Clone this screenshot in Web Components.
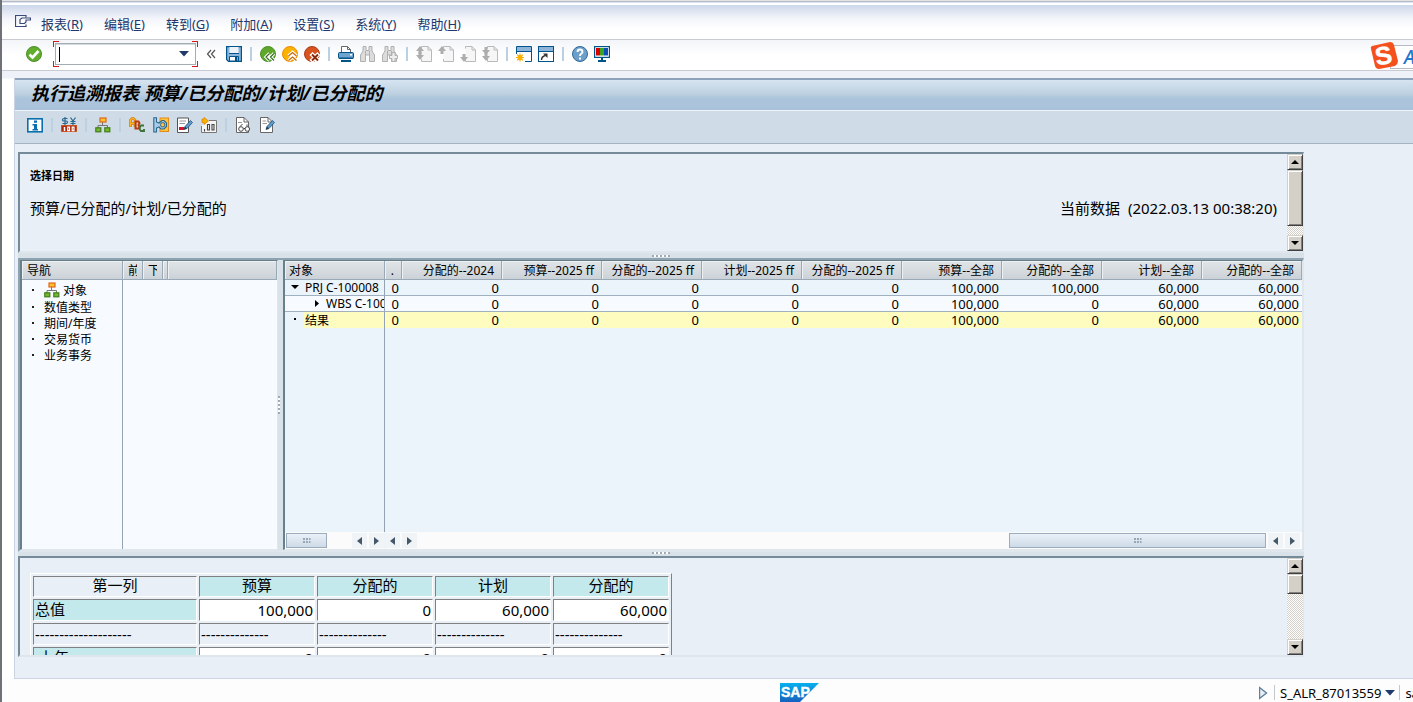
<!DOCTYPE html>
<html lang="zh-CN">
<head>
<meta charset="utf-8">
<title>执行追溯报表</title>
<style>
html,body{margin:0;height:100%;overflow:hidden}
body{font-family:"Noto Sans","Noto Sans CJK SC",sans-serif;font-size:13px;color:#000;background:#fff}
</style>
</head>
<body>
<sap-window></sap-window>
<script>
const define = (name, html, setup) => {
  const t = document.createElement('template');
  customElements.define(name, class extends HTMLElement {
    constructor() {
      super();
      t.innerHTML = t.innerHTML || html;
      this.attachShadow({mode: 'open'}).append(t.content.cloneNode(true));
    }
    connectedCallback() { if (setup) setup(this, this.shadowRoot); }
  });
};

const page = '<path d="M5.5 2.5V.5H12L15.500 4V15.500H5.500V13" fill="#f6f6f6" stroke="#b9b9b9"/><path d="M12 .5V4H15.500" fill="none" stroke="#b9b9b9"/>';
const up = '<path d="M4 0L8 5H5.500V8H2.500V5H0Z" fill="#adadad"/>';
const sheet = '<path d="M1.500 .5H9L13.500 5V15.500H1.500Z" fill="#fff" stroke="#666"/><path d="M9 .5V5H13.500" fill="none" stroke="#666"/>';
const binoc = '<path d="M3 .5H6V4.500H9V.5H12V5L14.500 9V15.500H9.500V9H5.500V15.500H.5V9L3 5Z" fill="#dcdcdc" stroke="#b0b0b0"/><path d="M5.500 5V9M9.500 5V9" stroke="#b0b0b0"/>';
const pencil = '<path d="M7 12.500L8 9.500L13.500 3.500L15.500 5.500L10 11.500Z" fill="#5e9bc8" stroke="#1e5580" stroke-width=".8"/><path d="M7 12.500L8 9.500L10 11.500Z" fill="#333"/>';
const ICONS = {
  exit: '<path d="M11 3.500V1.500H.5V12.500H11V10.500" fill="none" stroke="#3b4a78" stroke-width="1.200"/><path d="M5 9.500V5.500L7 4H15.500V6H11V8L9.500 9.500Z" fill="#fff" stroke="#3b4a78" stroke-width="1.200"/>',
  ok: '<circle cx="8" cy="8" r="7.500" fill="#61ad2f" stroke="#4a8f25"/><path d="M3.500 8.500L6.500 11.500L12.500 5" fill="none" stroke="#fff" stroke-width="2.600"/>',
  save: '<path d="M.6 .6H15.400V15.400H2.500L.6 13.500V.6Z" fill="#8ab6db" stroke="#00548a" stroke-width="1.200"/><path d="M3.500 1H12.500V7H3.500Z" fill="#eef3f8"/><path d="M3 7.500H13" stroke="#00548a"/><path d="M3.500 10.500H12.500V15H3.500Z" fill="#fff" stroke="#00548a"/><path d="M9 11H11.500V15H9Z" fill="#00548a"/>',
  back: '<circle cx="8" cy="8" r="7.500" fill="#5fa82c" stroke="#4c9124"/><path d="M9.500 7.500L6 11L9.500 14.500M14 7.500L10.500 11L14 14.500" fill="none" stroke="#fff" stroke-width="3.200"/><path d="M9.500 7.500L6 11L9.500 14.500M14 7.500L10.500 11L14 14.500" fill="none" stroke="#3a6d22" stroke-width="1.200"/>',
  home: '<circle cx="8" cy="8" r="7.500" fill="#f9b200" stroke="#f08a00"/><path d="M6.500 10L10.500 6.500L14.500 10M6.500 14.500L10.500 11L14.500 14.500" fill="none" stroke="#fff" stroke-width="3.400"/><path d="M6.500 10L10.500 6.500L14.500 10M6.500 14.500L10.500 11L14.500 14.500" fill="none" stroke="#c86a10" stroke-width="1.300"/>',
  cancel: '<circle cx="8" cy="8" r="7.500" fill="#d9531e" stroke="#a93c12"/><path d="M7 7.500L15 15.500M15 7.500L7 15.500" stroke="#fff" stroke-width="4.400"/><path d="M8 8.500L14 14.500M14 8.500L8 14.500" stroke="#8a2c0c" stroke-width="1.900"/>',
  print: '<path d="M3.500 7V.5H9.500L12.500 3.500V7" fill="#fff" stroke="#666"/><path d="M9.500 .5V3.500H12.500" fill="none" stroke="#666"/><rect x=".5" y="6.500" width="15" height="6" rx="1" fill="#6fa4cf" stroke="#00548a"/><path d="M1 11.500H15V13H1Z" fill="#00548a"/><path d="M12 8h2v1.500h-2z" fill="#fff"/><path d="M3 15H13" stroke="#00548a" stroke-width="2"/>',
  find: binoc,
  findnext: binoc + '<path d="M10 6.500H13V9.500H15.500V12.500H13V15.500H10V12.500H7.500V9.500H10Z" fill="#eee" stroke="#b0b0b0"/>',
  first: page + '<g transform="translate(0,0)">' + up + '</g><g transform="translate(0,14) scale(1,-1)">' + up + '</g>',
  prev: page + up,
  next: page + '<g transform="translate(0,16) scale(1,-1)">' + up + '</g>',
  last: page + '<g transform="translate(0,9) scale(1,-1)">' + up + '</g><g transform="translate(0,15) scale(1,-1)">' + up + '</g>',
  newsession: '<path d="M.5 8V.5H15.500V15.500H9" fill="#fff" stroke="#00548a"/><path d="M1 1H15V5H1Z" fill="#8db4d9"/><path d="M0 5.500H16" stroke="#00548a"/><path d="M4 7.500V15.500M0 11.500H8M1.200 8.700L6.800 14.300M6.800 8.700L1.200 14.300" stroke="#f6a800" stroke-width="1.200"/><circle cx="4" cy="11.500" r="2.500" fill="#f9b200"/>',
  shortcut: '<rect x=".5" y=".5" width="15" height="15" fill="#fff" stroke="#00548a"/><path d="M1 1H15V5H1Z" fill="#8db4d9"/><path d="M0 5.500H16" stroke="#00548a"/><path d="M3.500 14Q3.500 10.500 7.500 9.500" fill="none" stroke="#333" stroke-width="1.400"/><path d="M5 7.500H9.500V12Z" fill="#333"/>',
  help: '<circle cx="8" cy="8" r="7.500" fill="#6d9fcb" stroke="#2f6a9c"/><path d="M5.500 6Q5.500 3.500 8 3.500T10.500 6Q10.500 7 9.200 7.800T8 10" fill="none" stroke="#fff" stroke-width="1.900"/><path d="M7 11.500h2v2H7z" fill="#fff"/>',
  layout: '<rect x=".6" y=".6" width="14.800" height="10.800" fill="#fff" stroke="#00548a" stroke-width="1.200"/><path d="M2 2h4v7.500H2z" fill="#d90000"/><path d="M6 2h4v7.500H6z" fill="#3aa51e"/><path d="M10 2h4v7.500h-4z" fill="#0d4fb5"/><path d="M7 11.500h2v3H7zM4 14h8v2H4z" fill="#00548a"/>',
  info: '<rect x=".8" y="1.800" width="14.400" height="13" fill="#fff" stroke="#0a6fad" stroke-width="1.600"/><path d="M7 3.500h3v2.200H7zM5.500 7H10V12H11V13.500H5.500V12H7V8.500H5.500Z" fill="#0a6fad"/>',
  currency: '<path d="M6.500 1.500H3Q1.500 1.500 1.500 2.800T3 4H5Q6.500 4 6.500 5.200T5 6.500H1.500M4 0V8" fill="none" stroke="#29678c" stroke-width="1.200"/><path d="M9.500 .5L12 4L14.500 .5M12 4V8M9.500 4.500H14.500M9.500 6.500H14.500" fill="none" stroke="#29678c" stroke-width="1.200"/><path d="M.5 8.500H15.500V14.500H.5Z" fill="#ad2b12" stroke="#c9501a"/><path d="M3.500 10V14" stroke="#fff" stroke-width="1.500"/><path d="M6.700 10.200h1.800v3.400H6.700zM11.200 10.200h1.800v3.400h-1.800z" fill="none" stroke="#fff" stroke-width="1.200"/>',
  hierarchy: '<path d="M7.500 5V8.500M3 11V8.500H12.500V11" fill="none" stroke="#777"/><rect x="5" y="1" width="6" height="4" fill="#f9c22a" stroke="#e0661c" stroke-width="1.200"/><rect x=".8" y="10.800" width="5" height="4" fill="#76b82a" stroke="#3f7d1d" stroke-width="1.200"/><rect x="9.800" y="10.800" width="5" height="4" fill="#76b82a" stroke="#3f7d1d" stroke-width="1.200"/>',
  legend: '<path d="M1.500 10V3L3 1.500H4.500L6 3V10M1.500 6.500H6" fill="none" stroke="#d27b10" stroke-width="2.600"/><path d="M1.500 9.500V3L3 1.500H4.500L6 3V9.500M1.500 6.500H6" fill="none" stroke="#ffb51e" stroke-width="1.200"/><path d="M6.500 4.500H9.500L10.500 6L9.500 8L10.500 10L9.500 11.500H6.500Z" fill="none" stroke="#b83b12" stroke-width="2"/><path d="M15 8.500H12L10.800 10V12.500L12 14H15V12" fill="none" stroke="#3c7438" stroke-width="1.900"/>',
  wrap: '<rect x="7" y="1" width="8.500" height="13.500" fill="#ffc53a" stroke="#e08a1c"/><path d="M.8 .8H3.500V5L6 6L9 3.500H11L13.500 6V9.500L11 12H8L6 10L3.500 11V15H.8Z" fill="#a9cbe8" stroke="#29678c" stroke-width="1.100"/><circle cx="9.700" cy="7.800" r="2.200" fill="#ffc53a" stroke="#29678c"/>',
  edit: '<path d="M.5 1H11.500V15.500H.5Z" fill="#fff" stroke="#555"/><path d="M2.500 4H9M2.500 6.500H8" stroke="#999"/><path d="M2 10H7V13H2Z" fill="#d4122a"/>' + pencil,
  decimals: '<path d="M8 3.500H15.500V15.500H.5V9" fill="#f5f5f5" stroke="#777"/><path d="M1 2H3V.5L7.500 4L3 7.500V5.500H1Z" fill="#f9b200" stroke="#e08010" stroke-width=".8"/><path d="M3.500 12V14.500M6.500 7.500h2v5.500h-2zM11 7.500h2v5.500h-2z" fill="none" stroke="#444" stroke-width="1.100"/>',
  display: sheet + '<circle cx="6" cy="12" r="2.300" fill="#fff" stroke="#444"/><circle cx="12.300" cy="12" r="2.300" fill="#fff" stroke="#444"/><path d="M5 9.500L7.500 7M12 9.500V7.500M8.500 11.500H10" fill="none" stroke="#444"/><path d="M3 5.500H7" stroke="#999"/>',
  change: sheet + '<path d="M3.500 4H7M3.500 6.500H8" stroke="#999"/>' + pencil,
  play: '<path d="M4.500 2.500L11.500 8L4.500 13.500Z" fill="#e6eef6" stroke="#5f7f9f" stroke-width="1.400"/>',
  down: '<path d="M3 5H13L8 10.500Z" fill="#223a6b"/>',
  collapse: '<path d="M7 4L3.500 8L7 12M11 4L7.500 8L11 12" fill="none" stroke="#555" stroke-width="1.200"/>'
};
define('sap-icon', `<style>:host{display:inline-block;width:16px;height:16px;flex:none}svg{display:block}</style>
<svg width="16" height="16" viewBox="0 0 16 16" aria-hidden="true"></svg>`,
 (h, r) => { r.querySelector('svg').innerHTML = ICONS[h.getAttribute('name')] || ''; });

define('sap-tool', `<style>:host{display:block;flex:none}button{display:block;border:0;padding:0;margin:0;background:none;width:16px;height:16px}</style>
<button type="button"><sap-icon></sap-icon></button>`,
 (h, r) => {
   const b = r.querySelector('button'), icon = document.createElement('sap-icon');
   b.setAttribute('aria-label', h.getAttribute('label'));
   icon.setAttribute('name', h.getAttribute('name'));
   b.replaceChildren(icon);
 });

define('sap-sep', `<style>:host{display:block;flex:none;width:2px;height:14px;background:#bcd0e4}</style>`);

define('sap-menu-item', `<style>:host{display:block}button{font:inherit;line-height:20px;color:#22376b;border:0;padding:0;background:none;white-space:nowrap;display:block}</style>
<button type="button"><slot></slot></button>`);

define('sap-menubar', `<style>
:host{display:flex;align-items:center;gap:10px;height:34px;padding-left:13px;border-bottom:1px solid #c8ccd2;background:linear-gradient(#cdd7ea,#f3f5fa 40%,#fff 70%)}
nav{display:flex;gap:21px;padding-top:4px}
</style><sap-tool name="exit" label="菜单"></sap-tool>
<nav>
<sap-menu-item>报表(<u>R</u>)</sap-menu-item><sap-menu-item>编辑(<u>E</u>)</sap-menu-item><sap-menu-item>转到(<u>G</u>)</sap-menu-item>
<sap-menu-item>附加(<u>A</u>)</sap-menu-item><sap-menu-item>设置(<u>S</u>)</sap-menu-item><sap-menu-item>系统(<u>Y</u>)</sap-menu-item><sap-menu-item>帮助(<u>H</u>)</sap-menu-item>
</nav>`);

define('sap-command', `<style>
:host{display:block;width:145px;height:26px;box-sizing:border-box;padding:2px;
--r:linear-gradient(#d8141c,#d8141c);
background:var(--r) 0 0/6px 1px,var(--r) 0 0/1px 6px,var(--r) 100% 0/6px 1px,var(--r) 100% 0/1px 6px,var(--r) 0 100%/6px 1px,var(--r) 0 100%/1px 6px,var(--r) 100% 100%/6px 1px,var(--r) 100% 100%/1px 6px;background-repeat:no-repeat}
div{display:flex;align-items:center;height:22px;box-sizing:border-box;border:1px solid #a3abb3;background:#fff;padding:0 3px;box-shadow:inset 0 1px #d5dade}
i{width:1px;height:15px;background:#000}
input{flex:1;min-width:0;border:0;outline:0;background:none;font:inherit;padding:0;height:16px}
</style><div><i></i><input type="text" aria-label="命令字段"><sap-tool name="down" label="命令历史"></sap-tool></div>`);

define('sap-standard-bar', `<style>
:host{display:flex;align-items:center;gap:6px;box-sizing:border-box;height:31px;padding:0 0 2px 24px;border-bottom:1px solid #c8ccd2;background:linear-gradient(#f3f5f9,#fff 50%)}
sap-sep{margin:0 2px}sap-command{margin-left:5px}
</style>
<sap-tool name="ok" label="回车"></sap-tool><sap-command></sap-command><sap-tool name="collapse" label="折叠"></sap-tool><sap-tool name="save" label="保存"></sap-tool><sap-sep></sap-sep>
<sap-tool name="back" label="返回"></sap-tool><sap-tool name="home" label="退出"></sap-tool><sap-tool name="cancel" label="取消"></sap-tool><sap-sep></sap-sep>
<sap-tool name="print" label="打印"></sap-tool><sap-tool name="find" label="查找"></sap-tool><sap-tool name="findnext" label="查找下一个"></sap-tool><sap-sep></sap-sep>
<sap-tool name="first" label="第一页"></sap-tool><sap-tool name="prev" label="上一页"></sap-tool><sap-tool name="next" label="下一页"></sap-tool><sap-tool name="last" label="最后一页"></sap-tool><sap-sep></sap-sep>
<sap-tool name="newsession" label="新建会话"></sap-tool><sap-tool name="shortcut" label="快捷方式"></sap-tool><sap-sep></sap-sep>
<sap-tool name="help" label="帮助"></sap-tool><sap-tool name="layout" label="布局"></sap-tool>`);

define('sap-title', `<style>
:host{display:block;height:30px;border-top:2px solid #8fa0ba;border-bottom:1px solid #eef4fa;background:linear-gradient(#d6e4f1,#bed1e0 45%,#adc5dc 60%,#a9c1da)}
h1{margin:0;padding-left:16px;font-size:18px;line-height:26px;font-weight:700;font-style:italic;white-space:nowrap}
</style><h1><slot></slot></h1>`);

define('sap-app-bar', `<style>
:host{display:flex;align-items:center;gap:8px;box-sizing:border-box;height:33px;padding:0 0 4px 12px;border-bottom:1px solid #a3b3c2;background:#cfdce7}
</style>
<sap-tool name="info" label="信息"></sap-tool><sap-sep></sap-sep><sap-tool name="currency" label="货币"></sap-tool><sap-sep></sap-sep><sap-tool name="hierarchy" label="层次"></sap-tool><sap-sep></sap-sep>
<sap-tool name="legend" label="文本"></sap-tool><sap-tool name="wrap" label="特性"></sap-tool><sap-tool name="edit" label="格式"></sap-tool><sap-tool name="decimals" label="小数位"></sap-tool><sap-sep></sap-sep>
<sap-tool name="display" label="显示"></sap-tool><sap-tool name="change" label="更改"></sap-tool>`);

define('sap-vscroll', `<style>
:host{display:flex;flex-direction:column;flex:none;width:16px;background:repeating-conic-gradient(#d4d0c8 0 25%,#fff 0 50%) 0 0/2px 2px}
button,div{flex:none;box-sizing:border-box;width:16px;height:16px;margin:0;padding:0;background:#d4d0c8;border:1px solid;border-color:#d4d0c8 #404040 #404040 #d4d0c8;box-shadow:inset 1px 1px #fff,inset -1px -1px #808080}
div{height:var(--thumb)}span{flex:1}svg{display:block;margin:auto}
</style><button type="button" aria-label="向上滚动"><svg width="8" height="4"><path d="M0 4L4 0L8 4Z"/></svg></button><div></div><span></span>
<button type="button" aria-label="向下滚动"><svg width="8" height="4"><path d="M0 0L4 4L8 0Z"/></svg></button>`);

define('sap-html-pane', `<style>
:host{display:flex;flex:none;height:97px;overflow:hidden;border:solid;border-width:2px 1px 2px 2px;border-color:#758b99 #dfe6ec #dfe6ec #758b99;background:#e8eff6}
section{flex:1;min-width:0;overflow:hidden;padding:0 10px}
</style><section><slot></slot></section><sap-vscroll></sap-vscroll>`);

define('sap-report-header', `<style>
:host{display:block;padding-top:14px;white-space:nowrap}
h2{margin:0 0 12px;font-size:11px;line-height:16px;font-weight:700}
p{margin:0;display:flex;justify-content:space-between;font-size:15px;line-height:24px}
</style><h2>选择日期</h2><p><span>预算/已分配的/计划/已分配的</span><span>当前数据&nbsp; (2022.03.13 00:38:20)</span></p>`);

define('sap-splitter', `<style>
:host{display:flex;box-sizing:border-box;flex:none;height:5px;align-items:center;justify-content:center;background:#d9e2e9}
:host([thin]){height:4px;align-items:flex-start}
:host([vertical]){width:5px;height:auto;align-items:center;justify-content:flex-start}
i{width:18px;height:2px;background:repeating-linear-gradient(90deg,#a0abb5 0 2px,#fff 2px 4px)}
:host([vertical]) i{width:2px;height:18px;background:repeating-linear-gradient(#a0abb5 0 2px,#fff 2px 4px)}
</style><i></i>`);

const headCss = `background:linear-gradient(#e1e5e8,#cbd2d7);border-right:1px solid #9aa9b7;border-bottom:1px solid #9aa9b7;box-shadow:inset 1px 1px #eef1f3;box-sizing:border-box;height:19px;padding:1px 0 0;font-weight:400;font-size:12px;line-height:17px;white-space:nowrap;overflow:hidden`;

define('sap-nav', `<style>
:host{display:block;box-sizing:border-box;width:258px;flex:none;border:solid;border-width:1px 1px 1px 2px;border-color:#687f8c #dfe6ec #dfe6ec #687f8c;
background:linear-gradient(#94a3b3,#94a3b3) 100px 0/1px 100% no-repeat #f7faff}
table{width:100%;border-collapse:separate;border-spacing:0;table-layout:fixed}
th{${headCss};text-align:left}
th:first-child{width:101px;padding-left:5px}
.n{width:20px;padding-left:5px}.n span{display:block;width:9px;overflow:hidden}.g{width:5px}
ul{list-style:none;margin:0;padding:1px 0 0;font-size:12px}
li{display:flex;align-items:center;height:16px;padding-left:10px;gap:10px;white-space:nowrap;line-height:16px}
li:first-child{height:19px}
li::before{content:"";width:2px;height:2px;margin-bottom:2px;background:#222}
li span{display:flex;align-items:center;gap:3px}
sap-icon{margin-bottom:2px}
</style><table><thead><tr><th>导航</th><th class="n"><span>前</span></th><th class="n"><span>下</span></th><th class="g"></th><th></th></tr></thead></table>
<ul><li><span><sap-icon name="hierarchy"></sap-icon>对象</span></li><li><span>数值类型</span></li><li><span>期间/年度</span></li><li><span>交易货币</span></li><li><span>业务事务</span></li></ul>`);

define('sap-hscroll', `<style>
:host{display:flex;gap:2px;align-items:center;height:17px;background:#fbfbfb;overflow:hidden}
button{flex:none;width:15px;height:15px;padding:0;border:0;background:#f1f4f7}
svg{display:block;margin:auto}
.t{box-sizing:border-box;flex:none;width:var(--w);height:15px;border:1px solid #9cacbc;background:linear-gradient(#eaf1f8,#cddae7);display:grid;place-items:center}
.t i{width:8px;height:5px;background:repeating-linear-gradient(90deg,#98a7b5 0 2px,transparent 2px 3px);clip-path:polygon(0 0,100% 0,100% 40%,0 40%,0 60%,100% 60%,100% 100%,0 100%)}
.s{flex:1}.l2{display:none}
:host([both]) .l2{display:block}
</style>
<button type="button" class="l2" aria-label="向左"><svg width="5" height="8"><path d="M5 0V8L0 4Z" fill="#44586b"/></svg></button>
<button type="button" class="l2" aria-label="向右"><svg width="5" height="8"><path d="M0 0V8L5 4Z" fill="#44586b"/></svg></button>
<span class="s a"></span><div class="t"><i></i></div><span class="s b"></span>
<button type="button" aria-label="向左"><svg width="5" height="8"><path d="M5 0V8L0 4Z" fill="#44586b"/></svg></button>
<button type="button" aria-label="向右"><svg width="5" height="8"><path d="M0 0V8L5 4Z" fill="#44586b"/></svg></button>`,
 (h, r) => r.querySelector(h.hasAttribute('both') ? '.b' : '.a').remove());

define('sap-grid', `<style>
:host{display:flex;flex-direction:column;flex:1;min-width:0;border:solid;border-width:1px 1px 1px 2px;border-color:#687f8c #dfe6ec #dfe6ec #687f8c;background:#ebf3fb}
.b{flex:1;min-height:0;background:linear-gradient(#94a3b3,#94a3b3) 99px 0/1px 100% no-repeat}
table{width:100%;border-collapse:separate;border-spacing:0;table-layout:fixed}
th{${headCss};text-align:right;padding-right:7px}
th.o{width:100px;text-align:left;padding-left:4px}th.d{width:17px}
td{box-sizing:border-box;height:16px;padding:1px 3px 0 0;border-bottom:1px solid #9fb0c0;line-height:14px;text-align:right;white-space:nowrap;overflow:hidden}
td:first-child{text-align:left;border-right:1px solid #94a3b3;padding-left:6px;font-size:12px}
tr.two td:first-child{padding-left:27px;padding-right:0}
tr.two td{background:#f7fbff}
tr.sum td{background:#fffcc0;border-bottom-color:#fffcc0}
tr.sum td:first-child{background:linear-gradient(90deg,#ebf3fb 19px,#fffcc0 19px);border-bottom:0}
td div{display:flex;align-items:center;gap:6px;height:14px}
td svg{flex:none;display:block;width:8px;height:9px}
.h{display:flex;gap:1px}.h sap-hscroll:first-child{width:98px;flex:none;padding-left:1px}.h sap-hscroll:last-child{flex:1;padding-right:2px}
</style><div class="b"><table>
<thead><tr><th class="o">对象</th><th class="d">.</th><th>分配的--2024</th><th>预算--2025 ff</th><th>分配的--2025 ff</th><th>计划--2025 ff</th><th>分配的--2025 ff</th><th>预算--全部</th><th>分配的--全部</th><th>计划--全部</th><th>分配的--全部</th></tr></thead>
<tbody>
<tr><td><div><svg><path d="M0 1H8L4 5Z"/></svg>PRJ C-100008</div></td><td>0</td><td>0</td><td>0</td><td>0</td><td>0</td><td>0</td><td>100,000</td><td>100,000</td><td>60,000</td><td>60,000</td></tr>
<tr class="two"><td><div><svg><path d="M3 0V7L7 3.500Z"/></svg>WBS C-100</div></td><td>0</td><td>0</td><td>0</td><td>0</td><td>0</td><td>0</td><td>100,000</td><td>0</td><td>60,000</td><td>60,000</td></tr>
<tr class="sum"><td><div><svg><path d="M3 2H5V4H3Z"/></svg>结果</div></td><td>0</td><td>0</td><td>0</td><td>0</td><td>0</td><td>0</td><td>100,000</td><td>0</td><td>60,000</td><td>60,000</td></tr>
</tbody></table></div>
<div class="h"><sap-hscroll style="--w:41px"></sap-hscroll><sap-hscroll both style="--w:257px"></sap-hscroll></div>`);

define('sap-totals', `<style>
:host{display:block;padding-top:15px}
table{border:1px solid;border-color:#fff #808080 #808080 #fff;border-spacing:2px;table-layout:fixed;width:642px;font-size:15px}
th,td{box-sizing:border-box;border:1px solid;border-color:#808080 #fff #fff #808080;padding:0 1px;height:22px;line-height:20px;font-weight:400;text-align:left;overflow:hidden;white-space:nowrap}
thead th{height:21px;line-height:17px;padding-bottom:2px;text-align:center;background:#c3e9ec}
thead th:first-child{background:none;width:164px}
tbody th{background:#c3e9ec;line-height:18px;padding-bottom:2px}td.v{text-align:right;background:#fff}
</style><table><thead><tr><th>第一列</th><th>预算</th><th>分配的</th><th>计划</th><th>分配的</th></tr></thead>
<tbody><tr><th>总值</th><td class="v">100,000</td><td class="v">0</td><td class="v">60,000</td><td class="v">60,000</td></tr>
<tr><td>--------------------</td><td>--------------</td><td>--------------</td><td>--------------</td><td>--------------</td></tr>
<tr><th>&nbsp;上年</th><td class="v">0</td><td class="v">0</td><td class="v">0</td><td class="v">0</td></tr></tbody></table>`);

define('sap-workspace', `<style>
:host{display:flex;flex-direction:column;flex:1;min-height:0;background:#e8eff6;padding:8px 109px 21px 3px}
.m{display:flex;flex:1;min-height:0;border:solid;border-width:2px 1px 2px 2px;border-color:#8fa2b0 #dfe6ec #dfe6ec #8fa2b0}
</style>
<sap-html-pane style="--thumb:56px"><sap-report-header></sap-report-header></sap-html-pane>
<sap-splitter></sap-splitter>
<div class="m"><sap-nav></sap-nav><sap-splitter vertical></sap-splitter><sap-grid></sap-grid></div>
<sap-splitter thin></sap-splitter>
<sap-html-pane style="--thumb:20px"><sap-totals></sap-totals></sap-html-pane>`);

define('sap-status', `<style>
:host{display:grid;grid-template-columns:1fr 39px 440px 154px;height:23px;background:#fdfdfd;overflow:hidden}
.logo{display:block;margin-top:4px}
.r{display:flex;align-items:center;gap:5px;padding-top:4px;white-space:nowrap;overflow:hidden}
.r i{width:1px;height:15px;background:#c4c8cc;flex:none}
sap-tool{margin:0 -4px}.r sap-tool:first-child{margin-right:-2px}
</style><span></span>
<svg class="logo" width="39" height="19" viewBox="0 0 39 19" role="img" aria-label="SAP"><defs><linearGradient id="g" x2="0" y2="1"><stop stop-color="#07b0ee"/><stop offset="1" stop-color="#1661be"/></linearGradient></defs><path d="M0 0H39L20 19H0Z" fill="url(#g)"/><text x="1" y="14" font-family="Liberation Sans" font-weight="700" font-size="14" fill="#fff" stroke="#fff" stroke-width=".4">SAP</text></svg>
<span></span><div class="r"><sap-tool name="play" label="展开"></sap-tool><i></i><span>S_ALR_87013559</span><sap-tool name="down" label="系统信息"></sap-tool><i></i><span>sa</span></div>`);

define('ime-badge', `<style>
:host{position:absolute;right:0;top:41px;width:43px;height:28px;overflow:hidden}
.b{position:absolute;left:20px;right:-9px;top:4px;height:22px;border:1px solid #b5bac4;background:#fff;box-sizing:content-box}
b{position:absolute;left:13px;top:0;font-size:19px;line-height:22px;font-style:italic;font-weight:500;color:#1f74d0}
svg{position:absolute;left:0;top:0}
</style><div class="b"><b>A</b></div>
<svg width="29" height="29" viewBox="0 0 29 29" role="img" aria-label="S"><path d="M2 5L20 1Q23 1 24 4L28 20Q28 23 25 25L9 28Q6 28 5 25L1 8Q0 6 2 5Z" fill="#f4511e"/><text x="5" y="23" transform="rotate(-10 14 14)" font-family="Liberation Sans" font-weight="700" font-size="25" fill="#fff" stroke="#fff" stroke-width=".5">S</text></svg>`);

define('sap-window', `<style>
:host{display:flex;flex-direction:column;box-sizing:border-box;height:100vh;overflow:hidden;border-left:2px solid #6e7276;background:#fff;position:relative}
.tabs{height:1px;flex:none;background:#e4e4e4;border-bottom:1px solid #b4bac6;box-shadow:0 1px #dfe5f2;margin-bottom:3px}
sap-menubar,sap-standard-bar,sap-title,sap-app-bar,sap-status{flex:none}
main{display:flex;flex-direction:column;flex:1;min-height:0;margin:7px 0 0 12px;border-left:1px solid #ccd3e2;border-bottom:1px solid #ccd3e2}
.w{display:flex;flex-direction:column;flex:1;min-height:0;background:linear-gradient(#eef1f8 7px,#fff 8px)}
</style>
<div class="tabs"></div><sap-menubar></sap-menubar><sap-standard-bar></sap-standard-bar>
<div class="w"><main><sap-title>执行追溯报表 预算/已分配的/计划/已分配的</sap-title><sap-app-bar></sap-app-bar><sap-workspace></sap-workspace></main></div>
<sap-status></sap-status><ime-badge></ime-badge>`);
</script>
</body>
</html>
